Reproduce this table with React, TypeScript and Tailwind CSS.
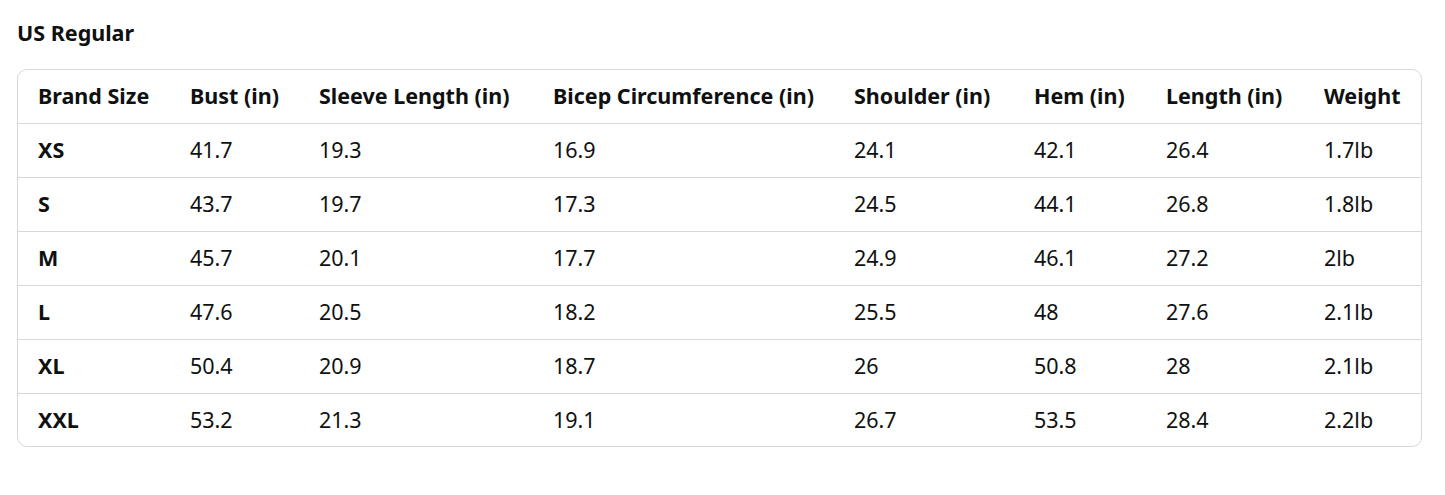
const headers = [
  'Brand Size',
  'Bust (in)',
  'Sleeve Length (in)',
  'Bicep Circumference (in)',
  'Shoulder (in)',
  'Hem (in)',
  'Length (in)',
  'Weight',
];

const rows = [
  ['XS', '41.7', '19.3', '16.9', '24.1', '42.1', '26.4', '1.7lb'],
  ['S', '43.7', '19.7', '17.3', '24.5', '44.1', '26.8', '1.8lb'],
  ['M', '45.7', '20.1', '17.7', '24.9', '46.1', '27.2', '2lb'],
  ['L', '47.6', '20.5', '18.2', '25.5', '48', '27.6', '2.1lb'],
  ['XL', '50.4', '20.9', '18.7', '26', '50.8', '28', '2.1lb'],
  ['XXL', '53.2', '21.3', '19.1', '26.7', '53.5', '28.4', '2.2lb'],
];

const cols = 'grid grid-cols-[152px_129px_234px_301px_180px_132px_158px_1fr] items-center';

const App = () => {
  return (
    <div className="min-h-screen bg-white px-[17px] pt-[19px] text-[#0f1111] font-['Noto_Sans',sans-serif]">
      <h2 className="text-[21.5px] font-bold leading-[28px] mb-[22px]">US Regular</h2>

      <div className="w-[1405px] border border-[#d5d9d9] rounded-[10px] text-[21.5px]">
        <div className={`${cols} h-[53px] font-bold`}>
          {headers.map((h) => (
            <div key={h} className="pl-[20px] whitespace-nowrap">{h}</div>
          ))}
        </div>
        {rows.map((r, ri) => (
          <div
            key={r[0]}
            className={`${cols} ${ri === rows.length - 1 ? 'h-[53px]' : 'h-[54px]'} border-t border-[#d5d9d9]`}
          >
            {r.map((v, i) => (
              <div key={i} className={`pl-[20px] ${i === 0 ? 'font-bold' : ''}`}>{v}</div>
            ))}
          </div>
        ))}
      </div>
    </div>
  );
};

export default App;
